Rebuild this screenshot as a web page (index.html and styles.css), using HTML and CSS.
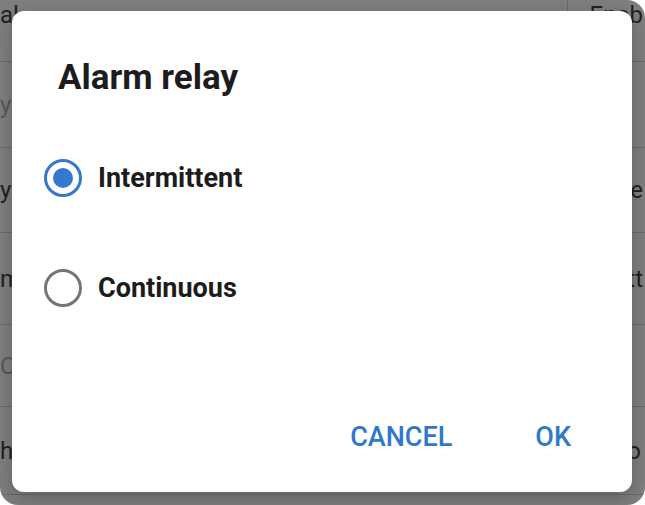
FILE: index.html
```html
<!DOCTYPE html>
<html lang="en">
<head>
    <meta charset="UTF-8">
    <meta name="viewport" content="width=device-width, initial-scale=1.0">
    <title>Alarm relay</title>
    <link rel="stylesheet" href="styles.css">
</head>
<body>

<div class="screen">
    <!-- Settings list behind the dialog -->
    <div class="settings">
        <div class="row row-top">
            <span class="name">al</span>
            <span class="value value-top">Enab</span>
        </div>
        <div class="row row-2">
            <span class="name muted">y s</span>
        </div>
        <div class="row row-3">
            <span class="name">y</span>
            <span class="value">re</span>
        </div>
        <div class="row row-4">
            <span class="name">m</span>
            <span class="value">tt</span>
        </div>
        <div class="row row-5">
            <span class="name muted">C</span>
        </div>
        <div class="row row-6">
            <span class="name">h</span>
            <span class="value value-end">o</span>
        </div>
    </div>

    <div class="scrim"></div>

    <div class="dialog">
        <h2 class="dialog-title">Alarm relay</h2>

        <div class="options">
            <label class="option">
                <input type="radio" name="relay" value="intermittent" checked>
                <span class="radio"></span>
                <span class="option-label">Intermittent</span>
            </label>
            <label class="option">
                <input type="radio" name="relay" value="continuous">
                <span class="radio"></span>
                <span class="option-label">Continuous</span>
            </label>
        </div>

        <div class="actions">
            <button class="text-btn">CANCEL</button>
            <button class="text-btn">OK</button>
        </div>
    </div>
</div>

</body>
</html>
```

FILE: styles.css
```css
/* Base */
html, body {
    margin: 0;
    padding: 0;
    background-color: #fff;
}

body {
    font-family: Roboto, 'Liberation Sans', sans-serif;
}

.screen {
    position: relative;
    width: 645px;
    height: 505px;
    overflow: hidden;
    border-radius: 0 18px 18px 18px;
    background-color: #fff;
}

/* Settings list (behind the dialog) */
.settings {
    margin-top: -32px;
}

.row {
    display: flex;
    align-items: center;
    justify-content: space-between;
    border-bottom: 1px solid #d6d6d6;
    font-size: 24px;
    color: #444;
}

.row-top { height: 93px; }
.row-2 { height: 85px; }
.row-3 { height: 84px; }
.row-4 { height: 91px; }
.row-5 { height: 81px; }
.row-6 { height: 87px; }

.muted {
    color: #b0b0b0;
}

.value {
    margin-right: 2px;
}

.value-top {
    align-self: stretch;
    display: flex;
    align-items: center;
    padding-left: 22px;
    border-left: 1px solid #d6d6d6;
    white-space: nowrap;
}

.value-end {
    margin-right: 4px;
}

/* Dim overlay */
.scrim {
    position: absolute;
    inset: 0;
    background-color: rgba(0, 0, 0, 0.5);
}

/* Dialog */
.dialog {
    position: absolute;
    top: 11px;
    left: 12px;
    width: 620px;
    height: 481px;
    box-sizing: border-box;
    display: flex;
    flex-direction: column;
    padding: 47px 0 0 0;
    background-color: #fff;
    border-radius: 12px;
    box-shadow: 0 6px 20px rgba(0, 0, 0, 0.25);
}

.dialog-title {
    margin: 0 0 0 46px;
    font-size: 35px;
    line-height: 40px;
    font-weight: 700;
    color: #1c1c1c;
}

.options {
    display: flex;
    flex-direction: column;
    margin-top: 25px;
}

.option {
    display: flex;
    align-items: center;
    height: 110px;
    padding-left: 32px;
    cursor: pointer;
}

.option input {
    display: none;
}

/* Radio circle */
.radio {
    position: relative;
    width: 38px;
    height: 38px;
    box-sizing: border-box;
    border: 3px solid #757575;
    border-radius: 50%;
}

.option input:checked + .radio {
    border-color: #3479cf;
}

.option input:checked + .radio::after {
    content: "";
    position: absolute;
    top: 6px;
    left: 6px;
    width: 20px;
    height: 20px;
    border-radius: 50%;
    background-color: #3479cf;
}

.option-label {
    margin-left: 16px;
    font-size: 27px;
    font-weight: 700;
    color: #1c1c1c;
}

/* Buttons */
.actions {
    display: flex;
    justify-content: flex-end;
    margin-top: auto;
    padding: 0 45px 32px 0;
}

.text-btn {
    padding: 8px 16px;
    margin-left: 51px;
    border: none;
    background: none;
    font-family: Roboto, 'Liberation Sans', sans-serif;
    font-size: 27px;
    line-height: 30px;
    font-weight: 500;
    color: #2f78cc;
    cursor: pointer;
}
```
